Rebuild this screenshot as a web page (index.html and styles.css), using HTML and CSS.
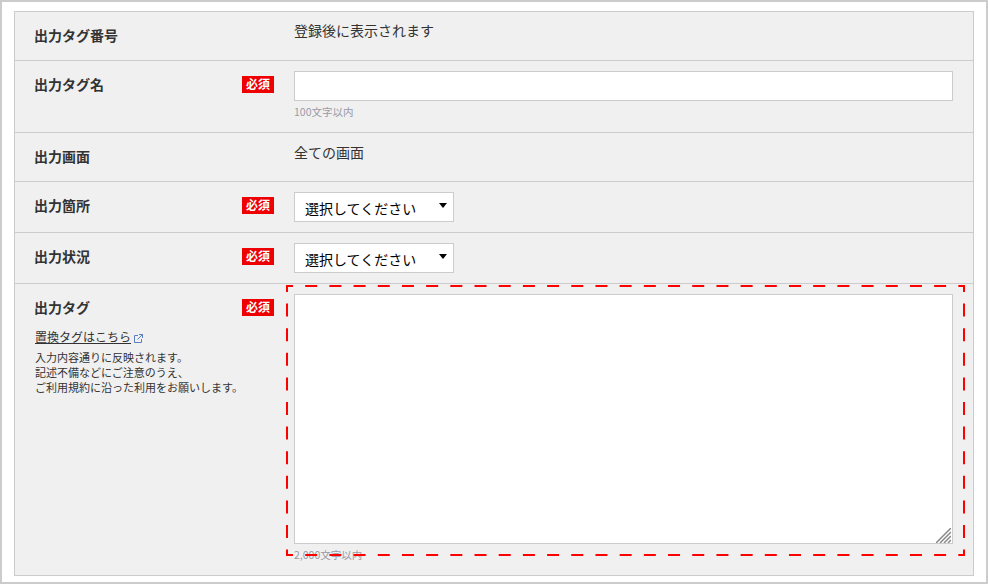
FILE: index.html
```html
<!DOCTYPE html>
<html lang="ja">
<head>
<meta charset="utf-8">
<title>出力タグ</title>
<link rel="stylesheet" href="styles.css">
</head>
<body>
<div class="frame">
  <div class="panel">
    <div class="row row-plain">
      <div class="label-col"><div class="label-head"><span class="label">出力タグ番号</span></div></div>
      <div class="value-col"><p class="value value-first">登録後に表示されます</p></div>
    </div>
    <div class="row">
      <div class="label-col"><div class="label-head"><span class="label">出力タグ名</span><span class="badge">必須</span></div></div>
      <div class="value-col">
        <input class="text-input" type="text">
        <p class="hint">100文字以内</p>
      </div>
    </div>
    <div class="row row-plain">
      <div class="label-col"><div class="label-head"><span class="label">出力画面</span></div></div>
      <div class="value-col"><p class="value">全ての画面</p></div>
    </div>
    <div class="row">
      <div class="label-col"><div class="label-head"><span class="label">出力箇所</span><span class="badge">必須</span></div></div>
      <div class="value-col"><div class="select-wrap"><select class="select"><option>選択してください</option></select></div></div>
    </div>
    <div class="row">
      <div class="label-col"><div class="label-head"><span class="label">出力状況</span><span class="badge">必須</span></div></div>
      <div class="value-col"><div class="select-wrap"><select class="select"><option>選択してください</option></select></div></div>
    </div>
    <div class="row row-last">
      <div class="label-col">
        <div class="label-head"><span class="label">出力タグ</span><span class="badge">必須</span></div>
        <p class="link-line"><a class="link" href="#">置換タグはこちら</a>
          <svg class="ext-icon" width="9" height="9" viewBox="0 0 9 9" fill="none" stroke="#5b7fc4" stroke-width="1"><path d="M4 1.5H.5v7h7V5"/><path d="M5 .5h3.5V4"/><path d="M8.5 .5 3.5 5.5"/></svg>
        </p>
        <p class="note">入力内容通りに反映されます。<br>記述不備などにご注意のうえ、<br>ご利用規約に沿った利用をお願いします。</p>
      </div>
      <div class="value-col">
        <div class="area-wrap">
          <textarea class="area"></textarea>
          <svg class="grip" width="15" height="15" viewBox="0 0 15 15" stroke="#888" stroke-width="1.5"><path d="M0 15 15 0M4 15 15 4M8 15 15 8M12 15l3-3"/></svg>
        </div>
        <p class="hint">2,000文字以内</p>
      </div>
    </div>
  </div>
  <svg class="dash" width="680" height="272" viewBox="0 0 680 272" fill="none" stroke="#f00" stroke-width="2">
    <path class="dash-h" d="M0 1H679M0 270H679"/>
    <path class="dash-v" d="M1 0V271M678 0V271"/>
  </svg>
</div>
</body>
</html>
```
FILE: styles.css
```css
* { box-sizing: border-box; }
html, body { margin: 0; padding: 0; }
body {
  width: 988px;
  height: 584px;
  background: #fff;
  color: #333;
  font-family: "Noto Sans CJK JP", "Liberation Sans", sans-serif;
  overflow: hidden;
}
p { margin: 0; }
.frame {
  position: relative;
  width: 988px;
  height: 584px;
  border: 2px solid #ccc;
  padding: 9px 12px;
}
.panel {
  width: 960px;
  border: 1px solid #ccc;
  background: #f0f0f0;
}
.row {
  display: flex;
  gap: 20px;
  padding: 0 20px;
  border-bottom: 1px solid #ccc;
}
.row-last { border-bottom: 0; }
.label-col { width: 239px; flex: none; padding-top: 13px; }
.value-col { flex: 1; padding: 10px 0; min-width: 0; }
.label-head { display: flex; justify-content: space-between; align-items: flex-start; }
.label { margin-left: -1px; font-size: 14px; line-height: 20px; font-weight: 700; color: #333; }
.badge {
  width: 32px;
  height: 17px;
  margin-top: 2px;
  background: #ee0000;
  color: #fff;
  font-size: 12px;
  line-height: 16px;
  font-weight: 700;
  text-align: center;
}
.row-plain { height: 49px; }
.row-plain .value-col { padding-top: 9px; }
.value { font-size: 14px; line-height: 21px; color: #333; }
.value-first { margin-top: -1px; }
.text-input {
  display: block;
  width: 659px;
  height: 30px;
  border: 1px solid #ccc;
  background: #fff;
  padding: 0 8px;
}
.hint { margin: 2px 0 2px; font-size: 10.5px; line-height: 17px; color: #9a9aa6; }
.select-wrap { position: relative; width: 160px; height: 30px; }
.select-wrap::after {
  content: "";
  position: absolute;
  left: 145px;
  top: 11px;
  border-left: 4px solid transparent;
  border-right: 4px solid transparent;
  border-top: 5px solid #000;
}
.select {
  display: block;
  width: 160px;
  height: 30px;
  border: 1px solid #ccc;
  border-radius: 0;
  background: #fff;
  color: #000;
  font-family: inherit;
  font-size: 14px;
  padding: 1px 10px 0;
  appearance: none;
  -webkit-appearance: none;
}
.area-wrap { position: relative; width: 659px; height: 250px; }
.area {
  display: block;
  width: 659px;
  height: 250px;
  border: 1px solid #ccc;
  background: #fff;
  resize: none;
}
.grip { position: absolute; right: 2px; bottom: 1px; }
.link-line { margin-top: 11px; font-size: 12px; line-height: 18px; }
.link { color: #333; text-decoration: underline; }
.ext-icon { vertical-align: -1px; }
.note { margin-top: 4px; font-size: 11px; line-height: 15px; color: #333; }
.dash { position: absolute; left: 284px; top: 283px; }
.dash-h { stroke-dasharray: 12 12.19; stroke-dashoffset: 5; }
.dash-v { stroke-dasharray: 13 11.6; stroke-dashoffset: 6; }
```
